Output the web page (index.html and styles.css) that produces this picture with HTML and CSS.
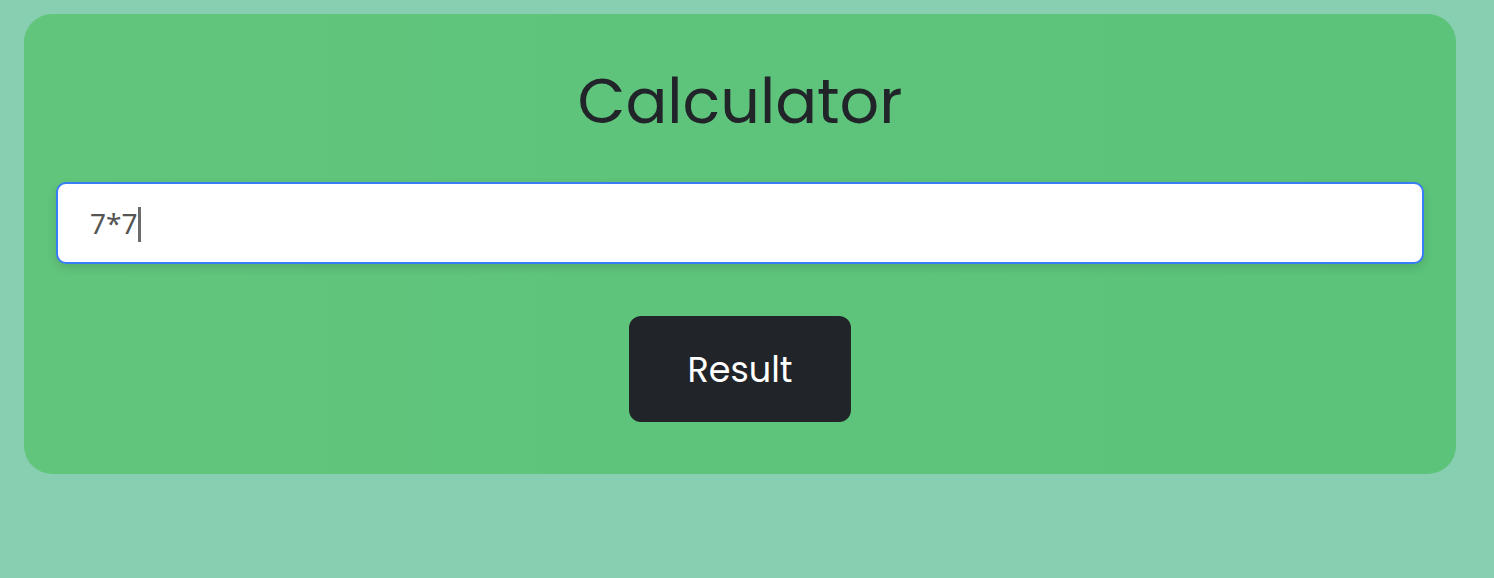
FILE: index.html
```html
<!DOCTYPE html>
<html>
<head>
<meta charset="utf-8">
<link rel="stylesheet" href="styles.css">
</head>
<body>
<div class="card">
  <h1 class="title">Calculator</h1>
  <div class="field"><span class="value">7*7</span><span class="caret"></span></div>
  <button class="result">Result</button>
</div>
</body>
</html>
```
FILE: styles.css
```css
html, body {
  margin: 0;
  padding: 0;
  background: #88cfb2;
  height: 100%;
}
body {
  padding: 14px 38px 0 24px;
  box-sizing: border-box;
}
.card {
  background: linear-gradient(90deg, #62c57c, #5bc37a);
  border-radius: 28px;
  padding: 52px 32px 52px 32px;
  display: flex;
  flex-direction: column;
  align-items: center;
}
.title {
  margin: 0 0 44px 0;
  font-family: "Poppins", "Inter", sans-serif;
  font-weight: 400;
  font-size: 62px;
  line-height: 72px;
  color: #212529;
}
.field {
  align-self: stretch;
  height: 82px;
  box-sizing: border-box;
  background: #fff;
  border: 2px solid #3a7cf6;
  border-radius: 10px;
  box-shadow: 0 4px 10px rgba(0, 0, 0, 0.12);
  display: flex;
  align-items: center;
  padding-left: 32px;
  margin-bottom: 52px;
}
.value {
  font-family: "Noto Sans", sans-serif;
  font-size: 28px;
  color: #555;
}
.caret {
  width: 3px;
  height: 35px;
  background: #6c6c6c;
  margin-left: 1px;
  margin-top: 2px;
}
.result {
  width: 222px;
  height: 106px;
  border: none;
  border-radius: 12px;
  background: #212529;
  color: #fff;
  font-family: "Poppins", "Inter", sans-serif;
  font-size: 35px;
  font-weight: 400;
  padding: 0;
}
```
